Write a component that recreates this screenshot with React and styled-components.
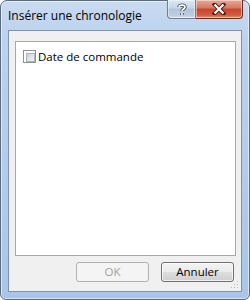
import React from 'react';
import styled, { createGlobalStyle } from 'styled-components';

const GlobalStyle = createGlobalStyle`
  html, body {
    margin: 0;
    padding: 0;
    background: #ffffff;
  }
  * {
    box-sizing: border-box;
  }
`;

const StyledWindow = styled.div`
  width: 250px;
  height: 300px;
  display: flex;
  flex-direction: column;
  padding: 0 7px 7px 7px;
  border: 1px solid #5a6c82;
  border-radius: 7px 7px 6px 6px;
  background: linear-gradient(180deg, #c9dbf1 0%, #bcd2ee 12%, #b3cbea 60%, #aac5e8 100%);
  box-shadow: inset 0 0 0 1px rgba(255, 255, 255, 0.55);
  font-family: 'Open Sans', 'Noto Sans', sans-serif;
`;

const StyledTitleBar = styled.div`
  height: 29px;
  display: flex;
  justify-content: space-between;
  align-items: flex-start;
  flex-shrink: 0;
`;

const StyledTitle = styled.div`
  padding-top: 6px;
  font-size: 12px;
  color: #000000;
  white-space: nowrap;
`;

const StyledCaptionButtons = styled.div`
  display: flex;
  margin-top: -1px;
  margin-right: -1px;
`;

const StyledCaptionButton = styled.div`
  width: ${({ $wide }) => ($wide ? '47px' : '29px')};
  height: 19px;
  display: flex;
  align-items: center;
  justify-content: center;
  border: 1px solid ${({ $close }) => ($close ? '#6b2a22' : '#6d7f96')};
  border-top: none;
  border-radius: ${({ $close }) => ($close ? '0 0 4px 0' : '0 0 0 4px')};
  border-left: ${({ $close }) => ($close ? 'none' : '1px solid #6d7f96')};
  background: ${({ $close }) =>
    $close
      ? 'linear-gradient(180deg, #e4a99a 0%, #d77760 45%, #c7442b 50%, #cf5e43 85%, #e39b7d 100%)'
      : 'linear-gradient(180deg, #dce7f4 0%, #c6d5e8 45%, #b3c4da 50%, #bccce0 85%, #d3e1f1 100%)'};
  box-shadow: inset 0 0 0 1px rgba(255, 255, 255, 0.45);
`;

const StyledClient = styled.div`
  flex: 1;
  display: flex;
  flex-direction: column;
  border: 1px solid #8193ac;
  background: #f0f0f0;
  position: relative;
`;

const StyledPanel = styled.div`
  flex: 1;
  margin: 10px 5px 0 6px;
  background: #ffffff;
  border: 1px solid #a9a9a9;
  padding: 7px 7px;
`;

const StyledCheckRow = styled.label`
  display: flex;
  align-items: center;
  gap: 2px;
  font-size: 11.5px;
  color: #000000;
`;

const StyledCheckbox = styled.span`
  width: 13px;
  height: 13px;
  border: 1px solid #8e8f8f;
  background: #ffffff;
  padding: 2px;
  display: block;
  flex-shrink: 0;

  &::after {
    content: '';
    display: block;
    width: 7px;
    height: 7px;
    background: linear-gradient(135deg, #cbcfd5 0%, #e2e4e7 50%, #f5f5f6 100%);
    border: 1px solid #aeb3b9;
  }
`;

const StyledFooter = styled.div`
  display: flex;
  justify-content: flex-end;
  gap: 12px;
  padding: 6px 7px 9px 0;
`;

const StyledButton = styled.button`
  width: 73px;
  height: 20px;
  padding: 0;
  font-family: 'Open Sans', 'Noto Sans', sans-serif;
  font-size: 11.5px;
  border-radius: 3px;
  border: 1px solid ${({ disabled }) => (disabled ? '#adb2b5' : '#707070')};
  color: ${({ disabled }) => (disabled ? '#a0a0a0' : '#000000')};
  background: ${({ disabled }) =>
    disabled
      ? '#f4f4f4'
      : 'linear-gradient(180deg, #f2f2f2 0%, #ebebeb 50%, #dddddd 51%, #cfcfcf 100%)'};
  box-shadow: ${({ disabled }) => (disabled ? 'none' : 'inset 0 0 0 1px rgba(255,255,255,0.7)')};
  line-height: 18px;
`;

const StyledGrip = styled.svg`
  position: absolute;
  right: 2px;
  bottom: 2px;
`;

const HelpIcon = () => (
  <svg width="12" height="13" viewBox="0 0 12 13">
    <path
      d="M3 4 C3 1.5 9 1.5 9 4 C9 6 6 6 6 8 M6 10 L6 12"
      fill="none"
      stroke="#3a4a5e"
      strokeWidth="3.4"
    />
    <path
      d="M3 4 C3 1.5 9 1.5 9 4 C9 6 6 6 6 8 M6 10 L6 12"
      fill="none"
      stroke="#ffffff"
      strokeWidth="1.6"
    />
  </svg>
);

const CloseIcon = () => (
  <svg width="14" height="12" viewBox="0 0 14 12">
    <path d="M2.5 1.5 L11.5 10.5 M11.5 1.5 L2.5 10.5" stroke="#4b1a12" strokeWidth="4" strokeLinecap="square" />
    <path d="M2.5 1.5 L11.5 10.5 M11.5 1.5 L2.5 10.5" stroke="#ffffff" strokeWidth="2.2" />
  </svg>
);

const App = () => (
  <>
    <GlobalStyle />
    <StyledWindow>
      <StyledTitleBar>
        <StyledTitle>Insérer une chronologie</StyledTitle>
        <StyledCaptionButtons>
          <StyledCaptionButton>
            <HelpIcon />
          </StyledCaptionButton>
          <StyledCaptionButton $close $wide>
            <CloseIcon />
          </StyledCaptionButton>
        </StyledCaptionButtons>
      </StyledTitleBar>
      <StyledClient>
        <StyledPanel>
          <StyledCheckRow>
            <StyledCheckbox />
            Date de commande
          </StyledCheckRow>
        </StyledPanel>
        <StyledFooter>
          <StyledButton disabled>OK</StyledButton>
          <StyledButton>Annuler</StyledButton>
        </StyledFooter>
        <StyledGrip width="9" height="9" viewBox="0 0 9 9">
          {[[7, 1], [4, 4], [7, 4], [1, 7], [4, 7], [7, 7]].map(([x, y]) => (
            <rect key={`${x}-${y}`} x={x} y={y} width="1" height="1" fill="#b7b7b7" />
          ))}
        </StyledGrip>
      </StyledClient>
    </StyledWindow>
  </>
);

export default App;
